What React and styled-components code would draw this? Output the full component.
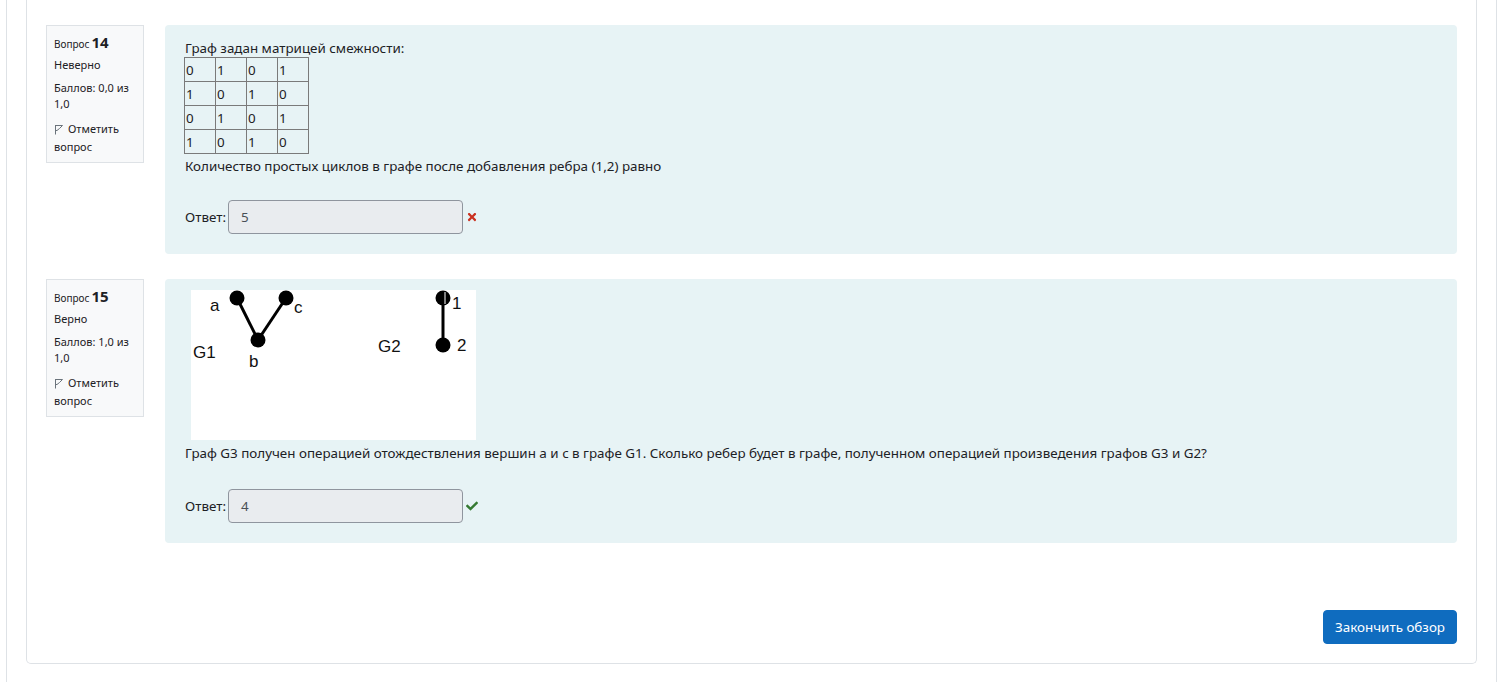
import React from "react";
import styled, { createGlobalStyle } from "styled-components";
import { FaTimes, FaCheck } from "react-icons/fa";

const GlobalStyle = createGlobalStyle`
  html, body {
    margin: 0;
    padding: 0;
    background: #fff;
    color: #1d2125;
    font-family: "Noto Sans", "Open Sans", sans-serif;
  }
`;

const Page = styled.div`
  margin-left: 6px;
  width: 1491px;
  min-height: 100vh;
  box-sizing: border-box;
  border-left: 1px solid #dee2e6;
  border-right: 1px solid #dee2e6;
  padding: 0 19px 19px;
  display: flex;
  flex-direction: column;
`;

const Card = styled.div`
  border: 1px solid #dee2e6;
  border-top: 0;
  border-radius: 0 0 5px 5px;
  padding: 25px 19px 19px;
  display: flex;
  flex-direction: column;
`;

const Question = styled.div`
  display: flex;
  gap: 21px;
  align-items: flex-start;
  margin-bottom: 25px;
`;

const Info = styled.div`
  width: 98px;
  flex: none;
  box-sizing: border-box;
  background: #f8f9fa;
  border: 1px solid #dee2e6;
  padding: 8px 7px 7px;
  font-size: 11px;
  line-height: 16px;
  color: #1d2125;
`;

const InfoLine = styled.div`
  margin-bottom: ${(p) => (p.$gap ? "7px" : "0")};
`;

const QNo = styled.div`
  font-size: 10px;
  margin-bottom: 5px;
  b {
    font-size: 15px;
    font-weight: 700;
    margin-left: 2px;
  }
`;

const Flag = styled.span`
  display: inline-flex;
  align-items: center;
  gap: 4px;
  margin-top: 2px;
  color: #1d2125;
  svg {
    flex: none;
  }
`;

const Content = styled.div`
  flex: 1;
  background: #e7f3f5;
  border-radius: 4px;
  padding: ${(p) => p.$pad || "14px 20px 20px"};
  font-size: 13.4px;
  line-height: 18px;
`;

const Matrix = styled.table`
  border-collapse: collapse;
  margin: 0 0 3px -1px;
  td {
    border: 1px solid #7a7a7a;
    width: 29px;
    height: 23px;
    padding: 0 0 0 1px;
    font-size: 13.4px;
    line-height: 18px;
    vertical-align: middle;
    color: #1d2125;
  }
`;

const Picture = styled.div`
  margin-left: 6px;
  width: 285px;
  height: 150px;
  background: #fff;
  margin-bottom: 4px;
`;

const AnswerRow = styled.div`
  display: flex;
  align-items: center;
  margin-top: ${(p) => p.$mt || 25}px;
`;

const AnswerLabel = styled.span`
  margin-right: 2px;
`;

const AnswerBox = styled.div`
  width: 235px;
  height: 34px;
  box-sizing: border-box;
  background: #e9ecef;
  border: 1px solid #8f959e;
  border-radius: 4px;
  padding: 0 12px;
  display: flex;
  align-items: center;
  color: #495057;
  font-size: 13.4px;
`;

const Mark = styled.span`
  display: inline-flex;
  margin-left: 3px;
  color: ${(p) => (p.$ok ? "#357a32" : "#ca3120")};
  font-size: 12px;
`;

const Footer = styled.div`
  display: flex;
  justify-content: flex-end;
  margin-top: 42px;
`;

const Button = styled.button`
  background: #0f6cbf;
  color: #fff;
  border: 1px solid #0f6cbf;
  border-radius: 4px;
  height: 34px;
  padding: 0 11px;
  font-family: inherit;
  font-size: 13.4px;
  cursor: pointer;
`;

function FlagIcon() {
  return (
    <svg width="10" height="11" viewBox="0 0 10 11">
      <path
        d="M1.5 1 V10.5 M1.5 1.5 L8.5 1.5 L5.5 4.5 L3 6.5 L1.5 6.5"
        fill="none"
        stroke="#6a737b"
        strokeWidth="1"
      />
    </svg>
  );
}

function GraphPicture() {
  const label = { fontFamily: "'Liberation Sans', sans-serif", fontSize: 17, fill: "#111" };
  return (
    <Picture>
      <svg width="285" height="150" viewBox="0 0 285 150">
        <line x1="46" y1="8" x2="67" y2="50" stroke="#000" strokeWidth="3" />
        <line x1="95" y1="8" x2="67" y2="50" stroke="#000" strokeWidth="3" />
        <line x1="252" y1="8" x2="252" y2="55" stroke="#000" strokeWidth="3" />
        <circle cx="46" cy="8" r="7.5" fill="#000" />
        <circle cx="95" cy="8" r="7.5" fill="#000" />
        <circle cx="67" cy="50" r="7.5" fill="#000" />
        <circle cx="252" cy="8" r="7.5" fill="#000" />
        <circle cx="252" cy="55" r="7.5" fill="#000" />
        <line x1="254" y1="2" x2="254" y2="14" stroke="#fff" strokeWidth="1" />
        <text x="19" y="21" style={label}>a</text>
        <text x="103" y="23" style={label}>c</text>
        <text x="58" y="77" style={label}>b</text>
        <text x="2" y="68" style={label}>G1</text>
        <text x="187" y="62" style={label}>G2</text>
        <text x="261" y="19" style={label}>1</text>
        <text x="266" y="61" style={label}>2</text>
      </svg>
    </Picture>
  );
}

function QuestionInfo({ num, state, grade }) {
  return (
    <Info>
      <QNo>
        Вопрос<b>{num}</b>
      </QNo>
      <InfoLine $gap>{state}</InfoLine>
      <InfoLine $gap>Баллов: {grade} из 1,0</InfoLine>
      <InfoLine>
        <Flag>
          <FlagIcon />
          Отметить
        </Flag>{" "}
        вопрос
      </InfoLine>
    </Info>
  );
}

function Answer({ value, ok, mt }) {
  return (
    <AnswerRow $mt={mt}>
      <AnswerLabel>Ответ:</AnswerLabel>
      <AnswerBox>{value}</AnswerBox>
      <Mark $ok={ok}>{ok ? <FaCheck /> : <FaTimes />}</Mark>
    </AnswerRow>
  );
}

const matrix = [
  [0, 1, 0, 1],
  [1, 0, 1, 0],
  [0, 1, 0, 1],
  [1, 0, 1, 0],
];

export default function App() {
  return (
    <>
      <GlobalStyle />
      <Page>
        <Card>
          <Question>
            <QuestionInfo num="14" state="Неверно" grade="0,0" />
            <Content>
              <div>Граф задан матрицей смежности:</div>
              <Matrix>
                <tbody>
                  {matrix.map((row, i) => (
                    <tr key={i}>
                      {row.map((v, j) => (
                        <td key={j}>{v}</td>
                      ))}
                    </tr>
                  ))}
                </tbody>
              </Matrix>
              <div>Количество простых циклов в графе после добавления ребра (1,2) равно</div>
              <Answer value="5" />
            </Content>
          </Question>
          <Question>
            <QuestionInfo num="15" state="Верно" grade="1,0" />
            <Content $pad="11px 20px 20px">
              <GraphPicture />
              <div>
                Граф G3 получен операцией отождествления вершин a и c в графе G1. Сколько ребер будет в
                графе, полученном операцией произведения графов G3 и G2?
              </div>
              <Answer value="4" ok mt={27} />
            </Content>
          </Question>
          <Footer>
            <Button>Закончить обзор</Button>
          </Footer>
        </Card>
      </Page>
    </>
  );
}
